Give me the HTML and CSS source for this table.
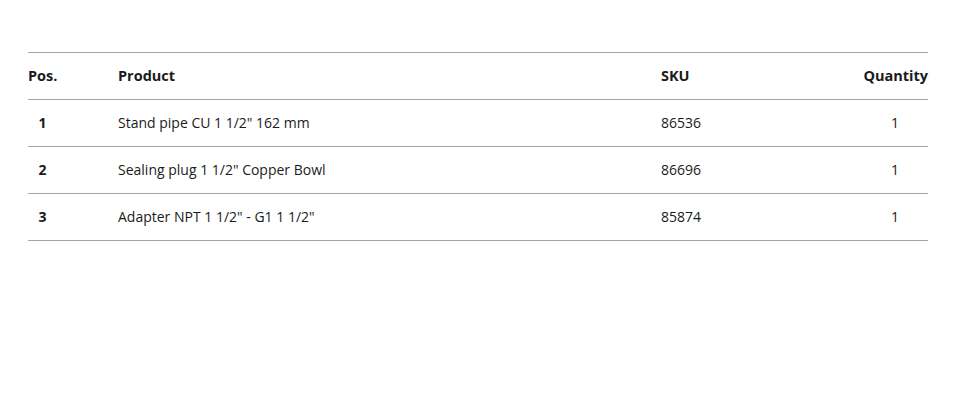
FILE: index.html
```html
<!DOCTYPE html>
<html lang="en">
<head>
<meta charset="utf-8">
<title>Parts list</title>
<link rel="stylesheet" href="styles.css">
</head>
<body>
<div class="parts">
  <div class="row head">
    <div class="pos"><span class="pos-inner">Pos.</span></div>
    <div class="product">Product</div>
    <div class="sku">SKU</div>
    <div class="qty"><span class="qty-inner">Quantity</span></div>
  </div>
  <div class="row">
    <div class="pos"><span class="pos-inner num">1</span></div>
    <div class="product">Stand pipe CU 1 1/2" 162 mm</div>
    <div class="sku">86536</div>
    <div class="qty"><span class="qty-inner">1</span></div>
  </div>
  <div class="row">
    <div class="pos"><span class="pos-inner num">2</span></div>
    <div class="product">Sealing plug 1 1/2" Copper Bowl</div>
    <div class="sku">86696</div>
    <div class="qty"><span class="qty-inner">1</span></div>
  </div>
  <div class="row">
    <div class="pos"><span class="pos-inner num">3</span></div>
    <div class="product">Adapter NPT 1 1/2" - G1 1 1/2"</div>
    <div class="sku">85874</div>
    <div class="qty"><span class="qty-inner">1</span></div>
  </div>
</div>
</body>
</html>
```
FILE: styles.css
```css
html, body {
  margin: 0;
  padding: 0;
  background: #ffffff;
}
body {
  font-family: "Open Sans", "Liberation Sans", sans-serif;
  font-size: 14px;
  color: #1b1b1b;
  padding: 52px 30px 0 28px;
}
.parts {
  width: 900px;
  border-top: 1px solid #9ba8b1;
}
.row {
  display: grid;
  grid-template-columns: 90px 543px 1fr 66px;
  align-items: center;
  height: 46px;
  padding-bottom: 1px;
  box-sizing: border-box;
  border-bottom: 1px solid #9ba8b1;
}
.row {
  height: 47px;
}
.head {
  font-weight: 700;
  font-size: 14.5px;
}
.pos-inner {
  display: inline-block;
  width: 29px;
  text-align: center;
}
.num {
  font-weight: 700;
}
.qty {
  text-align: center;
}
.head .qty {
  text-align: right;
}
```
